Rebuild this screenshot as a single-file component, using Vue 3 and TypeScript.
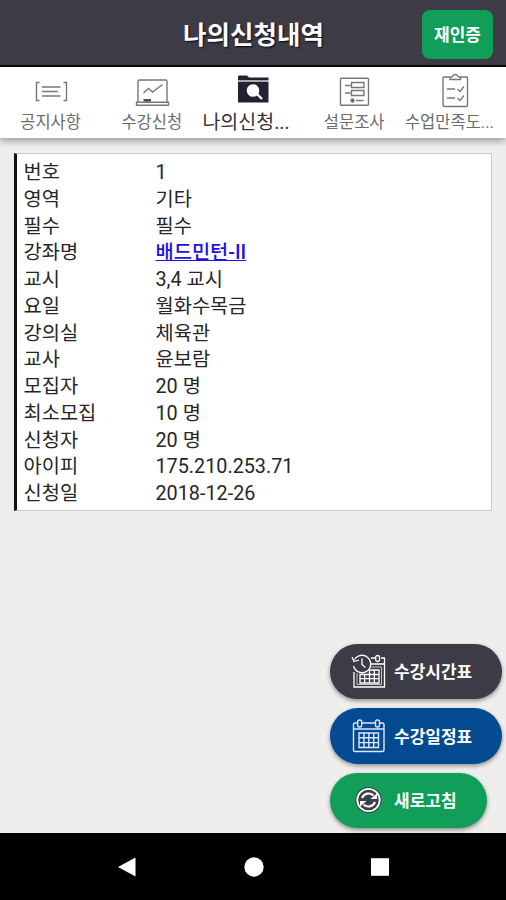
<script setup lang="ts">
interface Row {
  label: string
  value: string
  link?: boolean
}
interface Tab {
  icon: string
  label: string
  active?: boolean
}

const tabs: Tab[] = [
  { icon: 'notice', label: '공지사항' },
  { icon: 'board', label: '수강신청' },
  { icon: 'folder', label: '나의신청...', active: true },
  { icon: 'survey', label: '설문조사' },
  { icon: 'clipboard', label: '수업만족도...' },
]

const rows: Row[] = [
  { label: '번호', value: '1' },
  { label: '영역', value: '기타' },
  { label: '필수', value: '필수' },
  { label: '강좌명', value: '배드민턴-II', link: true },
  { label: '교시', value: '3,4 교시' },
  { label: '요일', value: '월화수목금' },
  { label: '강의실', value: '체육관' },
  { label: '교사', value: '윤보람' },
  { label: '모집자', value: '20 명' },
  { label: '최소모집', value: '10 명' },
  { label: '신청자', value: '20 명' },
  { label: '아이피', value: '175.210.253.71' },
  { label: '신청일', value: '2018-12-26' },
]
</script>

<template>
  <div class="screen">
    <header class="header">
      <h1 class="title">나의신청내역</h1>
      <button class="auth">재인증</button>
    </header>

    <nav class="tabs">
      <a v-for="tab in tabs" :key="tab.icon" class="tab" :class="[tab.icon, { active: tab.active }]">
        <svg class="tab-icon" viewBox="0 0 36 36" fill="none" stroke="#77777b" stroke-width="1.4">
          <g v-if="tab.icon === 'notice'">
            <path d="M6.500 9.500H3.500V27.500H6.500M30.500 9.500H33.500V27.500H30.500" />
            <path d="M9 14H27.500M9 18.500H25M9 23H27.500" />
          </g>
          <g v-else-if="tab.icon === 'board'">
            <path d="M4 29V8.500Q4 7 5.500 7H31.500Q33 7 33 8.500V29" />
            <path d="M2.500 29.300H34.500V32.300H2.500Z" />
            <path d="M9.500 20L14.500 15.500L18.500 19L28.500 11.500" />
            <path d="M9.500 27.300H17" stroke="#444" stroke-width="2.400" />
          </g>
          <g v-else-if="tab.icon === 'folder'" stroke="none">
            <path d="M3 3.500Q3 2.500 4 2.500H12L14 4.500H33.500V7H3Z" fill="#24222f" />
            <path d="M3 7H33.500V9H3Z" fill="#a9a8b0" />
            <path d="M3 9H33.500V29.500H3Z" fill="#24222f" />
            <circle cx="18" cy="17.500" r="6.300" fill="#fff" />
            <path d="M22 21L27 26" stroke="#fff" stroke-width="2.400" />
          </g>
          <g v-else-if="tab.icon === 'survey'">
            <rect x="4.500" y="5.300" width="28" height="27" rx="1" />
            <path d="M9 12.500H14.500M9 20H14.500M15.500 9.500H28V14.500H15.500ZM15.500 17.500H28V22.500H15.500ZM20 27.500H27.500" />
            <circle cx="16.500" cy="27.500" r="1.500" fill="#555" />
          </g>
          <g v-else>
            <path d="M13 4H7Q6 4 6 5V32Q6 33.500 7.500 33.500H29Q30.500 33.500 30.500 32V5Q30.500 4 29.500 4H23.500" />
            <path d="M13 6.500V4.500L15.500 3.500Q16 1.500 18.200 1.500T21 3.500L23.500 4.500V6.500Z" />
            <path d="M10 16H18M10 25H18M20.500 16L23 18.500L27 13.500M20.500 25L23 27.500L27 22.500" />
          </g>
        </svg>
        <span class="tab-label">{{ tab.label }}</span>
      </a>
    </nav>

    <main class="content">
      <dl class="card">
        <div v-for="row in rows" :key="row.label" class="row">
          <dt>{{ row.label }}</dt>
          <dd>
            <a v-if="row.link" class="link" href="#">{{ row.value }}</a>
            <template v-else>{{ row.value }}</template>
          </dd>
        </div>
      </dl>

      <div class="actions">
        <button class="fab dark">
          <svg class="fab-icon" viewBox="0 0 36 36" fill="none" stroke="#fff" stroke-width="1.300">
            <path d="M4 19V34H34.500V5H31M21 5H25.500M21 11H34.500" />
            <path d="M7 20V31.500H31.500V14H21" stroke-width="0.700" />
            <rect x="25.700" y="2.500" width="3.800" height="6" rx="1.800" />
            <path d="M10 21.500H29V30H10ZM10 25.700H29M14.700 21.500V30M19.500 17V30M24.300 17V30M19.500 17H29V21.500" />
            <path d="M4.500 6.500A8.700 8.700 0 1 1 3.500 13" />
            <path d="M12 5.500V11.500L15.500 14.500M2 4L4 8.500L9 7" />
          </svg>
          <span>수강시간표</span>
        </button>
        <button class="fab blue">
          <svg class="fab-icon" viewBox="0 0 36 36" fill="none" stroke="#dce8ff" stroke-width="1.400">
            <path d="M7.500 5H5Q3.500 5 3.500 6.500V32Q3.500 33.500 5 33.500H32.500Q34 33.500 34 32V6.500Q34 5 32.500 5H29.500M11.500 5H25.500M3.500 11H34" />
            <rect x="7.700" y="2" width="4" height="7" rx="1.800" />
            <rect x="25.500" y="2" width="4" height="7" rx="1.800" />
            <path d="M9 15H28.500V29.500H9ZM9 19.800H28.500M9 24.600H28.500M13.900 15V29.500M18.800 15V29.500M23.700 15V29.500" />
          </svg>
          <span>수강일정표</span>
        </button>
        <button class="fab green">
          <svg class="fab-icon" viewBox="0 0 36 36" fill="none">
            <circle cx="18.500" cy="18" r="13" fill="#3d3d46" />
            <circle cx="18.500" cy="18" r="11.200" stroke="#fff" stroke-width="1.800" />
            <path d="M12 16A7 7 0 0 1 23.500 13.600M25 20A7 7 0 0 1 13.500 22.400" stroke="#fff" stroke-width="2.200" />
            <path d="M20.500 17H27V11.500ZM16.500 19H10V24.500Z" fill="#fff" />
          </svg>
          <span>새로고침</span>
        </button>
      </div>
    </main>

    <footer class="system">
      <svg viewBox="0 0 20 20"><path d="M1 10L18.500 0.500V19.500Z" fill="#fff" /></svg>
      <svg viewBox="0 0 20 20"><circle cx="10" cy="10" r="9.700" fill="#fff" /></svg>
      <svg viewBox="0 0 20 20"><path d="M1 1.200H19V18.800H1Z" fill="#fff" /></svg>
    </footer>
  </div>
</template>

<style>
body {
  margin: 0;
}
</style>

<style scoped>
.screen {
  display: flex;
  flex-direction: column;
  width: 506px;
  height: 900px;
  overflow: hidden;
  background: #efeeec;
  font-family: Roboto, "Noto Sans CJK KR", sans-serif;
  color: #262626;
}
.header {
  display: grid;
  grid-template-columns: 1fr auto 1fr;
  align-items: center;
  box-sizing: border-box;
  height: 67px;
  padding: 3px 13px 0;
  background: #3d3c46;
  border-bottom: 2px solid #08080c;
}
.title {
  grid-column: 2;
  margin: 1px 0 0 1px;
  font-size: 25.5px;
  line-height: 36px;
  font-weight: 700;
  color: #fff;
  text-shadow: 1px 1px 2px #05051a;
}
.auth {
  justify-self: end;
  width: 71px;
  height: 49px;
  padding: 2px 0 0;
  border: 0;
  border-radius: 8px;
  background: #119e59;
  color: #fff;
  font: 700 17px/24px Roboto, "Noto Sans CJK KR", sans-serif;
}
.tabs {
  position: relative;
  display: grid;
  grid-template-columns: repeat(5, 1fr);
  flex: none;
  height: 71px;
  background: #fff;
  box-shadow: 0 3px 7px rgba(0, 0, 0, 0.35);
}
.tab {
  display: flex;
  flex-direction: column;
  align-items: center;
  gap: 2px;
  padding-top: 6px;
  white-space: nowrap;
  color: #6c6c6c;
}
.tab-icon {
  width: 36px;
  height: 36px;
}
.tab-label {
  font-size: 16.5px;
  line-height: 24px;
}
.tab.active .tab-label {
  font-size: 19.5px;
  color: #333;
  margin-left: -14px;
}
.tab.clipboard .tab-label {
  margin-left: -12px;
}
.content {
  flex: 1;
  display: flex;
  flex-direction: column;
  justify-content: space-between;
  padding: 15px 4px 5px 14px;
}
.card {
  width: 478px;
  height: 358px;
  margin: 0;
  padding: 6px 0 0 6.5px;
  box-sizing: border-box;
  background: #fff;
  border: 1px solid #c9c9c9;
  border-left: 3px solid #111;
}
.row {
  display: grid;
  grid-template-columns: 132px 1fr;
  height: 26.75px;
  font-size: 19.8px;
  line-height: 26.75px;
}
dt,
dd {
  margin: 0;
}
.link {
  color: #1a12e8;
  font-weight: 500;
  text-decoration: underline;
}
.actions {
  display: flex;
  flex-direction: column;
  gap: 9px;
  width: 172px;
  align-self: flex-end;
}
.fab {
  display: flex;
  align-items: center;
  gap: 8px;
  height: 55.500px;
  padding: 0 0 0 20px;
  border: 0;
  border-radius: 28px;
  color: #fff;
  font: 700 17px/24px Roboto, "Noto Sans CJK KR", sans-serif;
  box-shadow: 0 2px 4px rgba(0, 0, 0, 0.4);
}
.fab span {
  padding-top: 2px;
}
.fab-icon {
  width: 36px;
  height: 36px;
}
.dark {
  background: #3d3c46;
}
.blue {
  background: #034a90;
}
.green {
  width: 157px;
  background: #119e59;
}
.system {
  display: flex;
  justify-content: space-between;
  align-items: center;
  flex: none;
  height: 67px;
  box-sizing: border-box;
  padding: 0 116px 0 117px;
  background: #000;
}
.system svg {
  width: 20px;
  height: 20px;
}
</style>
